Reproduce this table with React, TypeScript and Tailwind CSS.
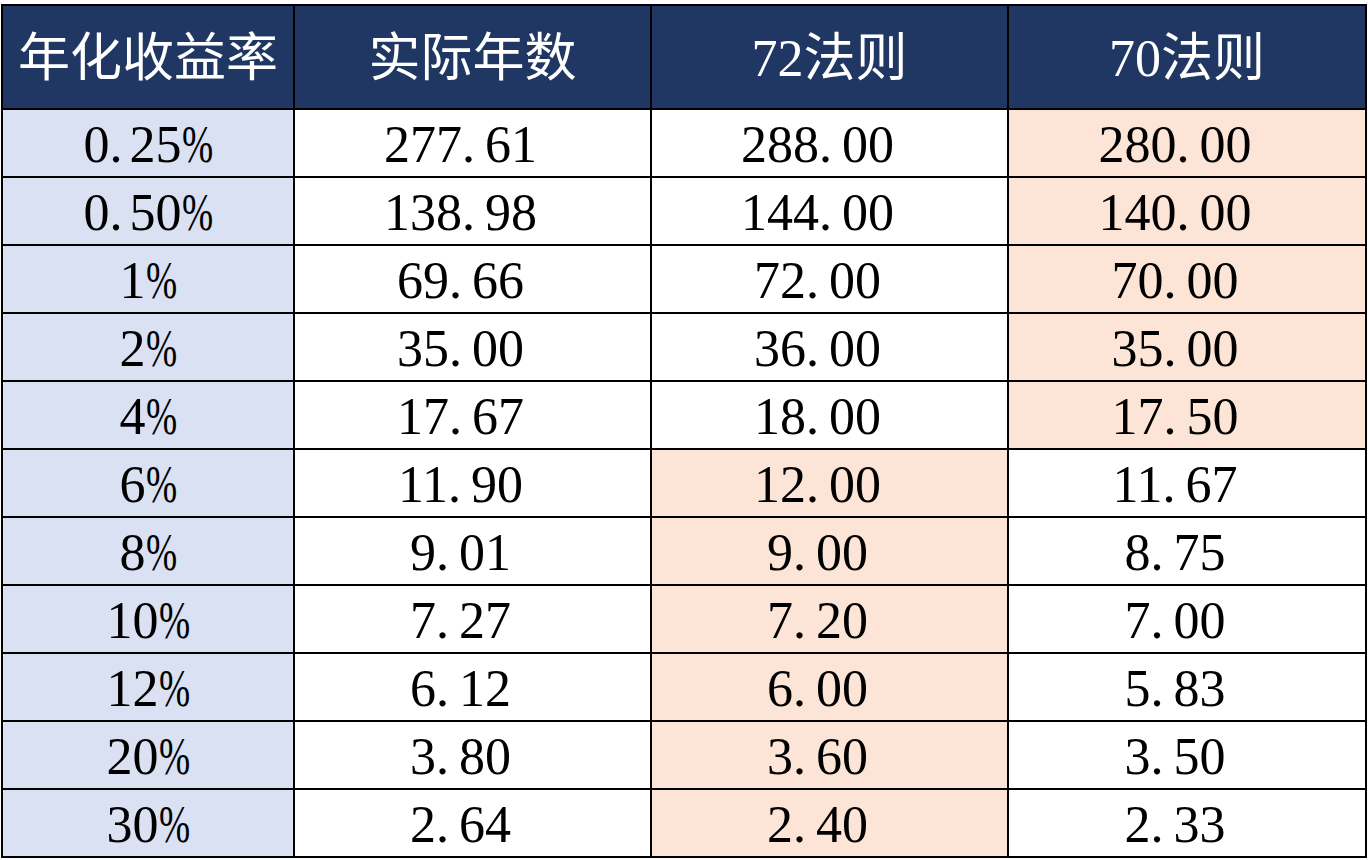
import React from "react";

type Row = { rate: string; actual: string; r72: string; r70: string; hl: 72 | 70 };

const rows: Row[] = [
  { rate: "0.25%", actual: "277.61", r72: "288.00", r70: "280.00", hl: 70 },
  { rate: "0.50%", actual: "138.98", r72: "144.00", r70: "140.00", hl: 70 },
  { rate: "1%", actual: "69.66", r72: "72.00", r70: "70.00", hl: 70 },
  { rate: "2%", actual: "35.00", r72: "36.00", r70: "35.00", hl: 70 },
  { rate: "4%", actual: "17.67", r72: "18.00", r70: "17.50", hl: 70 },
  { rate: "6%", actual: "11.90", r72: "12.00", r70: "11.67", hl: 72 },
  { rate: "8%", actual: "9.01", r72: "9.00", r70: "8.75", hl: 72 },
  { rate: "10%", actual: "7.27", r72: "7.20", r70: "7.00", hl: 72 },
  { rate: "12%", actual: "6.12", r72: "6.00", r70: "5.83", hl: 72 },
  { rate: "20%", actual: "3.80", r72: "3.60", r70: "3.50", hl: 72 },
  { rate: "30%", actual: "2.64", r72: "2.40", r70: "2.33", hl: 72 },
];

const Num = ({ v }: { v: string }) => {
  const i = v.indexOf(".");
  if (i < 0) return <>{v}</>;
  return (
    <>
      {v.slice(0, i)}
      <span className="mr-[10px]">.</span>
      {v.slice(i + 1)}
    </>
  );
};

// percentage column: narrow percent sign, tight point
const Pct = ({ v }: { v: string }) => {
  const body = v.replace("%", "");
  const i = body.indexOf(".");
  return (
    <>
      {i < 0 ? (
        body
      ) : (
        <>
          {body.slice(0, i)}
          <span className="mr-[7px]">.</span>
          {body.slice(i + 1)}
        </>
      )}
      <span className="inline-block w-[31px] origin-left scale-x-[0.72] text-left">%</span>
    </>
  );
};

const cell = "border-2 border-black text-center align-middle p-0";

export default function App() {
  return (
    <div
      className="min-h-screen bg-white pt-[4px] pl-[1px]"
      style={{ fontFamily: '"Liberation Serif", "Noto Sans CJK SC", serif' }}
    >
      <table className="w-[1364px] table-fixed border-collapse border-2 border-black text-[52px] leading-none text-black">
        <colgroup>
          <col className="w-[292px]" />
          <col className="w-[357px]" />
          <col className="w-[357px]" />
          <col className="w-[358px]" />
        </colgroup>
        <thead>
          <tr className="h-[104px] bg-[#213763] text-white text-[52px]">
            <th className={`${cell} font-normal pt-[3px]`}>年化收益率</th>
            <th className={`${cell} font-normal pt-[3px]`}>实际年数</th>
            <th className={`${cell} font-normal pt-[3px]`}>72法则</th>
            <th className={`${cell} font-normal pt-[3px]`}>70法则</th>
          </tr>
        </thead>
        <tbody>
          {rows.map((r) => (
            <tr key={r.rate} className="h-[68px]">
              <td className={`${cell} bg-[#d9e1f2] pt-[3px]`}>
                <Pct v={r.rate} />
              </td>
              <td className={`${cell} bg-white pr-[24px] pt-[3px]`}>
                <Num v={r.actual} />
              </td>
              <td className={`${cell} pr-[24px] pt-[3px] ${r.hl === 72 ? "bg-[#fce4d6]" : "bg-white"}`}>
                <Num v={r.r72} />
              </td>
              <td className={`${cell} pr-[24px] pt-[3px] ${r.hl === 70 ? "bg-[#fce4d6]" : "bg-white"}`}>
                <Num v={r.r70} />
              </td>
            </tr>
          ))}
        </tbody>
      </table>
    </div>
  );
}
